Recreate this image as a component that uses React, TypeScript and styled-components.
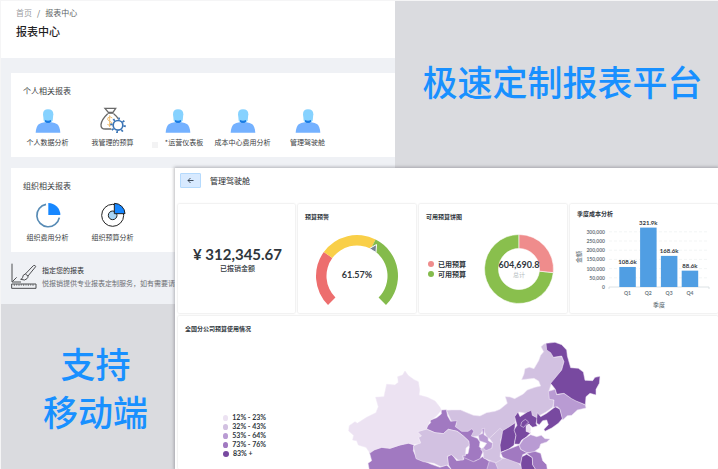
import React from "react";
import styled, { createGlobalStyle } from "styled-components";

const GlobalStyle = createGlobalStyle`
  *, *::before, *::after { box-sizing: border-box; }
  body {
    margin: 0;
    background: #f5f5f6;
    font-family: "Noto Sans CJK SC", sans-serif;
    color: #3a3d42;
  }
  h1, h2, h3, p, ul { margin: 0; padding: 0; font-weight: 400; }
  ul { list-style: none; }
  a { color: inherit; text-decoration: none; }
`;

const Page = styled.main`
  display: grid;
  grid-template-columns: minmax(0, 174fr) minmax(0, 220fr) minmax(0, 323fr);
  grid-template-rows: 167px minmax(136px, auto) minmax(0, 1fr);
  height: 100vh;
  padding: 1px 0 0 1px;
  overflow: hidden;
  background: #dadbdf;
  box-shadow: inset 1px 1px 0 #f5f5f6;
`;

const Slogan = styled.p<{ $place: string; $pad: string }>`
  grid-area: ${(p) => p.$place};
  display: grid;
  place-content: center;
  padding: ${(p) => p.$pad};
  text-align: center;
  white-space: nowrap;
  color: #1890ff;
  font-size: 35px;
  line-height: 48px;
  font-weight: 500;
`;

/* Report centre */

const ReportWindow = styled.section`
  grid-area: 1 / 1 / 3 / 3;
  background: #eff1f5;
  overflow: hidden;
`;

const ReportHeader = styled.header`
  height: 57px;
  padding: 6px 15px;
  background: #fff;
`;

const Breadcrumb = styled.nav`
  display: flex;
  gap: 5px;
  font-size: 8px;
  line-height: 12px;
  color: #5c5f64;
  a { color: #9a9c9f; }
`;

const PageTitle = styled.h1`
  margin-top: 3px;
  font-size: 11px;
  line-height: 18px;
  font-weight: 500;
  color: #1f2124;
`;

const ReportBody = styled.div`
  display: flex;
  flex-direction: column;
  gap: 11px;
  padding: 15px 0 0 10px;
`;

const ReportCard = styled.section`
  padding: 11px 0 9px;
  background: #fff;
`;

const ReportCardTitle = styled.h2`
  padding-left: 12px;
  font-size: 8px;
  line-height: 14px;
`;

const TileList = styled.ul`
  display: flex;
  padding: 9px 0 0 4px;
`;

const Tile = styled.a`
  display: flex;
  flex-direction: column;
  align-items: center;
  gap: 4px;
  width: 65px;
`;

const TileLabel = styled.span`
  display: flex;
  align-items: center;
  gap: 7px;
  font-size: 7px;
  line-height: 11px;
  white-space: nowrap;
`;

const Patch = styled.i`
  width: 6px;
  height: 6px;
  margin-top: 4px;
  background: #f3f3f4;
`;

const Icon = styled.svg`
  width: 26px;
  height: 26px;
  flex: none;
  display: block;
`;

const CustomReport = styled.div`
  display: flex;
  gap: 5px;
`;

const CustomTitle = styled.h2`
  padding-top: 1px;
  font-size: 7px;
  line-height: 13px;
  color: #2c2e31;
`;

const CustomText = styled.p`
  font-size: 7px;
  line-height: 13px;
  white-space: nowrap;
  color: #6b6e73;
`;

/* Dashboard */

const DashWindow = styled.section`
  grid-area: 2 / 2 / 4 / 4;
  z-index: 1;
  display: flex;
  flex-direction: column;
  gap: 16px;
  padding: 5px 0 0 3px;
  background: #fff;
  box-shadow: 0 0 3px 1px rgba(60, 60, 70, 0.35);
  overflow: hidden;
  font-family: Lato, "Noto Sans CJK SC", sans-serif;
  color: #2f363c;
`;

const DashHeader = styled.header`
  display: flex;
  align-items: center;
  gap: 9px;
  padding-left: 2px;
`;

const BackButton = styled.button`
  display: grid;
  place-items: center;
  width: 21px;
  height: 15px;
  padding: 0;
  border: 1px solid #b5dafd;
  border-radius: 1px;
  background: #d8eaff;
  color: #2c3a4a;
  svg { width: 7px; height: 7px; }
`;

const DashTitle = styled.h1`
  font-size: 8px;
  line-height: 12px;
  color: #26292c;
`;

const Panels = styled.div`
  display: grid;
  grid-template-columns: 117fr 118fr 148fr 148fr;
  grid-template-rows: 109px 1fr;
  gap: 3px;
  flex: 1;
`;

const Panel = styled.section<{ $wide?: boolean; $pad?: number }>`
  display: flex;
  flex-direction: column;
  min-width: 0;
  grid-column: ${(p) => (p.$wide ? "1 / -1" : "auto")};
  padding: ${(p) => p.$pad ?? 8}px 0 0 7px;
  border-radius: 1px;
  background: #fff;
  box-shadow: 0 0 2px rgba(0, 0, 0, 0.2);
`;

const PanelTitle = styled.h2`
  font-size: 6px;
  line-height: 10px;
  font-weight: 700;
`;

const AmountPanel = styled(Panel)`
  align-items: center;
  justify-content: center;
  padding: 1px 0 0 2px;
`;

const Amount = styled.p`
  font-size: 15px;
  line-height: 18px;
  font-weight: 700;
`;

const AmountLabel = styled.p`
  font-size: 7px;
  line-height: 11px;
  font-weight: 500;
`;

const GaugeChart = styled.svg`
  width: 84px;
  height: 84px;
  margin: 7px 0 0 10px;
  overflow: visible;
`;

const PieBody = styled.div`
  display: flex;
  align-items: center;
  gap: 18px;
  margin-top: 7px;
`;

const PieChart = styled.svg`
  width: 70px;
  height: 80px;
  overflow: visible;
`;

const Legend = styled.ul<{ $row: number }>`
  padding-left: 2px;
  font-size: 7px;
  line-height: ${(p) => p.$row}px;
  font-weight: 700;
  white-space: nowrap;
`;

const LegendItem = styled.li<{ $color: string }>`
  display: flex;
  align-items: center;
  gap: 4px;
  &::before {
    content: "";
    width: 6px;
    height: 6px;
    border-radius: 50%;
    background: ${(p) => p.$color};
  }
`;

const BarChart = styled.svg`
  width: 141px;
  height: 92px;
  overflow: visible;
`;

const MapBody = styled.div`
  display: flex;
  align-items: flex-start;
  gap: 74px;
  padding-left: 36px;
`;

const MapLegend = styled(Legend)`
  margin-top: 79px;
  width: 45px;
`;

const MapChart = styled.svg`
  width: 280px;
  height: 139px;
  margin-top: -4px;
`;

function PersonIcon() {
  return (
    <Icon viewBox="0 0 78 78" aria-hidden="true">
      <path d="M24 22Q24 7 39 7Q55 7 55 22L53 40Q49 49 39 49Q29 49 26 40Z" fill="#86d2ff" />
      <path d="M2 77Q4 57 11 52Q18 48 29 46Q39 50 49 46Q60 48 67 52Q74 57 76 77Z" fill="#74b1ff" />
      <path d="M30 39Q39 43 48 39V44Q46 48 39 48Q32 48 30 44Z" fill="#197be4" />
    </Icon>
  );
}

function BudgetIcon() {
  return (
    <Icon viewBox="0 0 78 78" fill="none" aria-hidden="true">
      <path d="M15 4H47L39 16H25Z" stroke="#6a6a6a" strokeWidth="4" />
      <path d="M23 19H41" stroke="#6a6a6a" strokeWidth="3" />
      <path d="M23 20Q4 38 3 53Q2 66 16 66H34M41 20Q50 27 54 35" stroke="#6a6a6a" strokeWidth="4" />
      <path d="M37 33Q31 27 24 32Q20 39 28 42Q39 46 35 53Q29 58 22 52M29 25V60" stroke="#f0bd70" strokeWidth="3" />
      <circle cx="54" cy="55" r="20" stroke="#3a74b5" strokeWidth="7" strokeDasharray="5 10.7" />
      <circle cx="54" cy="55" r="14.5" stroke="#3a74b5" strokeWidth="5" fill="#fff" />
    </Icon>
  );
}

function CostPieIcon() {
  return (
    <Icon viewBox="0 0 78 78" fill="none" aria-hidden="true">
      <path d="M33 7A34 34 0 1 0 73 47" stroke="#578bb5" strokeWidth="5" />
      <path d="M40 3A36 36 0 0 1 76 39H40Z" fill="#1787ff" />
    </Icon>
  );
}

function BudgetPieIcon() {
  return (
    <Icon viewBox="0 0 78 78" fill="none" aria-hidden="true">
      <circle cx="38" cy="40" r="33" stroke="#222" strokeWidth="3" />
      <circle cx="38" cy="40" r="13" fill="#a9d5f5" stroke="#222" strokeWidth="3" />
      <path d="M43 4A32 32 0 0 1 75 35H43Z" fill="#1787ff" stroke="#222" strokeWidth="3" />
    </Icon>
  );
}

function DesignIcon() {
  return (
    <Icon viewBox="0 0 78 78" fill="none" stroke="#4d4e51" strokeWidth="3" aria-hidden="true">
      <path d="M3 2V57H30M4 56L17 43" />
      <path d="M43 33L67 8Q73 5 74 11L51 39Z" />
      <path d="M43 33Q35 35 35 43Q33 49 29 49Q43 54 48 47Q52 43 51 39" />
      <path d="M2 63H75V76H2Z" />
      <path d="M10 63V69M17 63V68M24 63V69M31 63V68M38 63V69M45 63V68M52 63V69M59 63V68M66 63V69" strokeWidth="2" />
    </Icon>
  );
}

const polar = (cx: number, cy: number, r: number, deg: number) => {
  const a = ((deg - 90) * Math.PI) / 180;
  return `${(cx + r * Math.cos(a)).toFixed(2)} ${(cy + r * Math.sin(a)).toFixed(2)}`;
};

const ring = (cx: number, cy: number, outer: number, inner: number, from: number, to: number) => {
  const large = to - from > 180 ? 1 : 0;
  return `M${polar(cx, cy, outer, from)}A${outer} ${outer} 0 ${large} 1 ${polar(cx, cy, outer, to)}L${polar(cx, cy, inner, to)}A${inner} ${inner} 0 ${large} 0 ${polar(cx, cy, inner, from)}Z`;
};

const personal = [
  { label: "个人数据分析", icon: PersonIcon },
  { label: "我管理的预算", icon: BudgetIcon },
  { label: "*运营仪表板", icon: PersonIcon, patch: true },
  { label: "成本中心费用分析", icon: PersonIcon },
  { label: "管理驾驶舱", icon: PersonIcon },
];

const organisation = [
  { label: "组织费用分析", icon: CostPieIcon },
  { label: "组织预算分析", icon: BudgetPieIcon },
];

type TileData = { label: string; icon: () => React.JSX.Element; patch?: boolean };

function TileGroup({ title, tiles }: { title: string; tiles: TileData[] }) {
  return (
    <ReportCard>
      <ReportCardTitle>{title}</ReportCardTitle>
      <TileList>
        {tiles.map(({ label, icon: Glyph, patch }) => (
          <li key={label}>
            <Tile href="#">
              <Glyph />
              <TileLabel>
                {patch && <Patch />}
                <span>{label}</span>
              </TileLabel>
            </Tile>
          </li>
        ))}
      </TileList>
    </ReportCard>
  );
}

function Gauge() {
  return (
    <GaugeChart viewBox="0 0 84 84" role="img" aria-label="61.57%">
      <path d={ring(42, 47, 41, 30.5, -135, -54)} fill="#ed6e6e" />
      <path d={ring(42, 47, 41, 30.5, -54, 27)} fill="#f9cf48" />
      <path d={ring(42, 47, 41, 30.5, 27, 135)} fill="#84bb4c" />
      <path d="M61.5 15.5L61 23.5L54.5 19.5Z" fill="#74838f" stroke="#fff" strokeWidth="1" />
      <text x="42" y="49" textAnchor="middle" fontSize="9" fontWeight="700" fill="#2f363c">61.57%</text>
    </GaugeChart>
  );
}

function Donut() {
  return (
    <PieChart viewBox="0 0 70 80" role="img" aria-label="总计 604,690.8">
      <path d={ring(35, 40, 34.5, 20.5, 96, 360)} fill="#89bf4d" stroke="#fff" strokeWidth="0.6" />
      <path d={ring(35, 40, 34.5, 20.5, 0, 96)} fill="#ef8c8c" stroke="#fff" strokeWidth="0.6" />
      <text x="35" y="39" textAnchor="middle" fontSize="9" fontWeight="700" fill="#2f363c">604,690.8</text>
      <text x="35" y="48" textAnchor="middle" fontSize="6" fill="#b4bcc0">总计</text>
    </PieChart>
  );
}

const quarters = [
  { name: "Q1", value: 108.6 },
  { name: "Q2", value: 321.9 },
  { name: "Q3", value: 168.6 },
  { name: "Q4", value: 88.6 },
];
const ticks = ["0", "50,000", "100,000", "150,000", "200,000", "250,000", "300,000"];

function Bars() {
  const base = 68;
  return (
    <BarChart viewBox="0 0 141 92" role="img" aria-label="季度成本分析">
      {ticks.map((t, i) => {
        const y = base - i * 9.2;
        return (
          <g key={t}>
            {i > 0 && <path d={`M32 ${y}H132`} stroke="#eef0f1" strokeWidth="0.7" strokeDasharray="3 2" />}
            <text x="28" y={y + 2} textAnchor="end" fontSize="5" fontWeight="700" fill="#6b7780">{t}</text>
          </g>
        );
      })}
      <path d={`M32 ${base + 2}V${base}H132V${base + 2}`} fill="none" stroke="#d3dade" strokeWidth="0.8" />
      {quarters.map(({ name, value }, i) => {
        const h = value * 0.1845;
        const x = 42.3 + i * 20.8;
        return (
          <g key={name} textAnchor="middle" fontWeight="700">
            <rect x={x} y={base - h} width="16.5" height={h} fill="#509ee3" />
            <text x={x + 8.2} y={base - h - 3} fontSize="6" fill="#2f363c">{value}k</text>
            <text x={x + 8.2} y={base + 8} fontSize="5" fill="#6b7780">{name}</text>
          </g>
        );
      })}
      <text x="82" y="88" textAnchor="middle" fontSize="6" fontWeight="500" fill="#6b7780">季度</text>
      <text transform="translate(3.5 38) rotate(-90)" textAnchor="middle" fontSize="6" fontWeight="500" fill="#6b7780">金额</text>
    </BarChart>
  );
}

const bands = [
  { label: "12% - 23%", color: "#ece2f2" },
  { label: "32% - 43%", color: "#d2c1e1" },
  { label: "53% - 64%", color: "#b99bd3" },
  { label: "73% - 76%", color: "#a179c1" },
  { label: "83% +", color: "#7849a0" },
];

const provinces: { id: string; band: number; d: string }[] = [
  { id: "tibet", band: 3, d: "88 366L105 358L125 352L150 355L180 345L205 339L222 345L220 362L230 385L252 393L272 402L300 412L320 405L335 420H88L84 400L95 392Z" },
  { id: "sichuan", band: 3, d: "322 380L335 372L350 392L372 388L366 374L384 384L405 393L428 380L445 392L470 394L480 420H335L325 404Z" },
  { id: "hubei", band: 1, d: "470 386L496 385L530 394L545 410L550 420H462Z" },
  { id: "chongqing", band: 2, d: "448 393L466 398L475 420H440Z" },
  { id: "inner-mongolia", band: 1, d: "319 241L335 240L362 240L378 247L400 256L420 258L440 248L465 244L480 238L502 220L496 200L510 201L524 206L550 192L562 180L585 172L602 168L596 153L582 145L545 149L552 132L555 116L568 112L582 116L596 92L602 76L611 65L603 50L612 42L622 40L621 58L635 68L640 82L665 80L672 95L665 120L635 158L627 182L632 205L642 212L638 232L618 246L600 256L592 266L574 252L536 246L526 260L526 278L490 304L464 310L448 326L440 320L430 298L418 318L395 320L385 304L362 306L345 292L350 279L334 273Z" },
  { id: "gansu", band: 3, d: "260 297L262 288L272 278L270 271L290 263L304 252L304 240L319 239L323 258L332 274L351 272L346 290L365 304L384 304L396 296L401 304L394 318L412 325L420 336L418 350L430 362L420 386L400 395L370 382L368 374L384 371L388 352L386 333L370 318L352 304L325 298L310 311L285 308Z" },
  { id: "qinghai", band: 1, d: "232 305L258 297L285 308L310 311L325 298L352 304L370 318L386 333L388 346L378 354L376 378L368 377L370 390L354 390L334 374L322 379L325 404L303 410L282 400L250 395L228 386L220 348L242 338L235 321L244 318Z" },
  { id: "xinjiang", band: 0, d: "195 123L204 136L222 149L235 155L239 180L237 195L262 202L285 213L300 232L304 240L290 257L270 272L258 298L232 305L244 318L235 323L241 340L222 343L205 340L180 345L150 355L125 352L103 360L90 369L78 352L55 345L50 332L38 330L41 316L26 303L28 287L45 275L52 280L80 262L108 248L115 230L107 202L132 200L140 163L165 165L175 157L173 140L188 135Z" },
  { id: "shaanxi", band: 1, d: "448 325L480 295L490 304L482 330L482 360L480 380L487 387L468 398L445 390L430 384L430 368L422 357L435 350L455 355L458 338Z" },
  { id: "ningxia", band: 2, d: "415 316L428 310L426 296L434 295L432 314L444 322L445 332L458 340L455 355L438 362L430 354L440 340L418 332Z" },
  { id: "shanxi", band: 4, d: "488 302L508 290L526 278L524 300L528 316L522 346L505 358L482 367L480 345L485 320Z" },
  { id: "hebei", band: 4, d: "524 260L534 246L540 260L562 246L574 241L577 256L592 264L588 280L592 288L578 292L566 282L558 290L560 304L572 308L558 322L545 330L538 343L523 342L528 316L522 300L531 286Z" },
  { id: "beijing", band: 4, d: "545 276L556 268L566 276L558 284L551 292L542 288Z" },
  { id: "tianjin", band: 0, d: "560 286L568 282L572 297L570 308L558 304Z" },
  { id: "liaoning", band: 4, d: "590 266L592 248L602 260L620 250L646 230L660 238L668 265L655 280L635 294L615 304L612 298L625 284L620 270L608 272L598 284L590 280Z" },
  { id: "jilin", band: 2, d: "625 184L646 178L650 194L672 190L694 205L715 215L736 225L738 234L712 240L695 256L682 257L668 270L660 238L652 230L640 232L642 210L628 208Z" },
  { id: "heilongjiang", band: 4, d: "618 40L645 37L665 44L680 60L682 78L692 113L715 115L730 126L735 151L758 152L765 142L780 139L778 160L768 178L768 195L750 190L738 200L736 224L708 213L695 206L672 190L650 193L646 178L632 160L665 120L672 95L665 78L640 82L632 68L620 60Z" },
  { id: "henan", band: 3, d: "482 368L505 358L538 345L542 358L562 368L548 374L542 402L525 396L500 387L488 382Z" },
  { id: "shandong", band: 2, d: "538 346L550 328L572 314L590 320L604 316L615 326L630 327L620 336L602 342L598 354L580 367L560 368L542 358Z" },
  { id: "anhui", band: 4, d: "546 380L560 373L577 383L578 404L588 420H545L542 402Z" },
  { id: "jiangsu", band: 3, d: "560 370L585 364L602 370L608 392L620 404L622 420H588L578 404L577 383Z" },
];

function ChinaMap() {
  return (
    <MapChart viewBox="0 0 840 417" role="img" aria-label="全国分公司预算使用情况">
      <g stroke="#efe6f5" strokeWidth="1.6" strokeLinejoin="round">
        {provinces.map((p) => (
          <path key={p.id} d={`M${p.d}`} fill={bands[p.band].color} />
        ))}
      </g>
    </MapChart>
  );
}

export default function App() {
  return (
    <>
      <GlobalStyle />
      <Page lang="zh-CN">
        <ReportWindow>
          <ReportHeader>
            <Breadcrumb aria-label="breadcrumb">
              <a href="#">首页</a>
              <span>/</span>
              <span>报表中心</span>
            </Breadcrumb>
            <PageTitle>报表中心</PageTitle>
          </ReportHeader>
          <ReportBody>
            <TileGroup title="个人相关报表" tiles={personal} />
            <TileGroup title="组织相关报表" tiles={organisation} />
            <CustomReport>
              <DesignIcon />
              <div>
                <CustomTitle>指定您的报表</CustomTitle>
                <CustomText>悦报销提供专业报表定制服务，如有需要请</CustomText>
              </div>
            </CustomReport>
          </ReportBody>
        </ReportWindow>

        <Slogan $place="1 / 3 / 2 / 4" $pad="0 0 8px 12px">极速定制报表平台</Slogan>
        <Slogan $place="3 / 1 / 4 / 2" $pad="0 0 0 15px">
          支持
          <br />
          移动端
        </Slogan>

        <DashWindow>
          <DashHeader>
            <BackButton type="button" aria-label="返回">
              <svg viewBox="0 0 14 14" fill="none" stroke="currentColor" strokeWidth="1.8">
                <path d="M13 7H2M7 2L2 7L7 12" />
              </svg>
            </BackButton>
            <DashTitle>管理驾驶舱</DashTitle>
          </DashHeader>
          <Panels>
            <AmountPanel>
              <Amount>¥ 312,345.67</Amount>
              <AmountLabel>已报销金额</AmountLabel>
            </AmountPanel>
            <Panel>
              <PanelTitle>预算预警</PanelTitle>
              <Gauge />
            </Panel>
            <Panel>
              <PanelTitle>可用预算饼图</PanelTitle>
              <PieBody>
                <Legend $row={10}>
                  <LegendItem $color="#ef8c8c">已用预算</LegendItem>
                  <LegendItem $color="#84bb4c">可用预算</LegendItem>
                </Legend>
                <Donut />
              </PieBody>
            </Panel>
            <Panel $pad={5}>
              <PanelTitle>季度成本分析</PanelTitle>
              <Bars />
            </Panel>
            <Panel $wide>
              <PanelTitle>全国分公司预算使用情况</PanelTitle>
              <MapBody>
                <MapLegend $row={9}>
                  {bands.map((b) => (
                    <LegendItem key={b.label} $color={b.color}>{b.label}</LegendItem>
                  ))}
                </MapLegend>
                <ChinaMap />
              </MapBody>
            </Panel>
          </Panels>
        </DashWindow>
      </Page>
    </>
  );
}
